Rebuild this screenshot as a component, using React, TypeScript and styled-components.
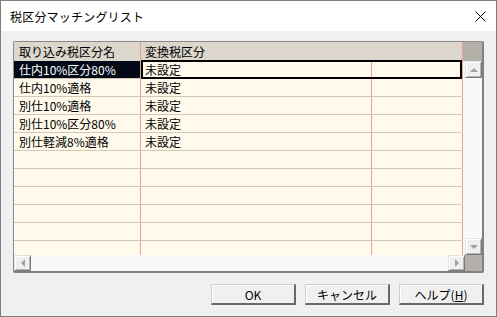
import React from "react";
import styled, { createGlobalStyle, css } from "styled-components";

const Global = createGlobalStyle`
  html, body { margin: 0; padding: 0; background: #f0f0f0; }
  body { width: 497px; height: 317px; overflow: hidden; font-family: "Noto Sans CJK JP", "Noto Sans", sans-serif; }
`;

const Window = styled.div`
  width: 497px;
  height: 317px;
  box-sizing: border-box;
  border: 1px solid #7e7e7e;
  background: #f0f0f0;
  display: flex;
  flex-direction: column;
`;

const TitleBar = styled.div`
  height: 30px;
  background: #ffffff;
  display: flex;
  align-items: center;
  justify-content: space-between;
  padding: 0 10px 0 9px;
  flex-shrink: 0;
`;

const Title = styled.span`
  font-size: 12px;
  color: #000;
  letter-spacing: 0.2px;
`;

const Body = styled.div`
  flex: 1;
  display: flex;
  flex-direction: column;
  padding: 10px 12px 0 12px;
`;

const Grid = styled.div`
  width: 471px;
  height: 232px;
  box-sizing: border-box;
  border-top: 1px solid #8a8a8a;
  border-left: 1px solid #8a8a8a;
  border-right: 2px solid #808080;
  border-bottom: 2px solid #808080;
  border-radius: 2px;
  display: flex;
  flex-direction: column;
  overflow: hidden;
  background: #fffaeb;
`;

const Main = styled.div`
  height: 213px;
  display: flex;
`;

const Table = styled.div`
  width: 449px;
  height: 213px;
  overflow: hidden;
  background: #fffaeb;
`;

const COLS = "126px 1px 230px 1px 90px 1px";

const HeaderRow = styled.div`
  display: grid;
  grid-template-columns: ${COLS};
  height: 19px;
  background: #dcd6cc;
`;

const Line = styled.div<{ $hidden?: boolean }>`
  background: ${(p) => (p.$hidden ? "transparent" : "#dca596")};
`;

const HeadCell = styled.div<{ $pad: number }>`
  font-size: 12px;
  line-height: 19px;
  padding-left: ${(p) => p.$pad}px;
  color: #000;
  white-space: nowrap;
  overflow: hidden;
`;

const Row = styled.div<{ $selected?: boolean }>`
  position: relative;
  display: grid;
  grid-template-columns: ${COLS};
  height: 17px;
  border-bottom: 1px solid #d3c8b6;
  ${(p) =>
    p.$selected &&
    css`
      &::after {
        content: "";
        position: absolute;
        left: 127px;
        top: -1px;
        width: 321px;
        height: 19px;
        box-sizing: border-box;
        border: 2px solid #000;
      }
    `}
`;

const Cell = styled.div<{ $pad: number; $selected?: boolean }>`
  font-size: 12px;
  line-height: 17px;
  padding-left: ${(p) => p.$pad}px;
  white-space: nowrap;
  overflow: hidden;
  color: ${(p) => (p.$selected ? "#ffffff" : "#000")};
  background: ${(p) => (p.$selected ? "#030816" : "transparent")};
`;

const track = css`
  background: repeating-conic-gradient(#f3f3f3 0 25%, #ffffff 0 50%) 0 0 / 2px 2px;
`;

const VScroll = styled.div`
  width: 19px;
  display: flex;
  flex-direction: column;
  ${track};
`;

const Corner = styled.div<{ $w: number; $h: number }>`
  width: ${(p) => p.$w}px;
  height: ${(p) => p.$h}px;
  background: #b3b0a9;
  flex-shrink: 0;
`;

const Fill = styled.div`
  flex: 1;
`;

const ScrollBtn = styled.div<{ $dir: "up" | "down" | "left" | "right" }>`
  width: 17px;
  height: 17px;
  box-sizing: border-box;
  flex-shrink: 0;
  background: #f0f0f0;
  border-top: 1px solid #e3e3e3;
  border-left: 1px solid #e3e3e3;
  border-right: 1px solid #7a7a7a;
  border-bottom: 1px solid #7a7a7a;
  box-shadow: inset 1px 1px 0 #ffffff, inset -1px -1px 0 #b4b4b4;
  display: flex;
  align-items: center;
  justify-content: center;
  margin-left: ${(p) => (p.$dir === "up" || p.$dir === "down" ? "2px" : "0")};
  &::before {
    content: "";
    width: 0;
    height: 0;
    ${(p) =>
      p.$dir === "up"
        ? css`border-left: 4px solid transparent; border-right: 4px solid transparent; border-bottom: 4px solid #a0a0a0;`
        : p.$dir === "down"
        ? css`border-left: 4px solid transparent; border-right: 4px solid transparent; border-top: 4px solid #a0a0a0;`
        : p.$dir === "left"
        ? css`border-top: 4px solid transparent; border-bottom: 4px solid transparent; border-right: 4px solid #a0a0a0;`
        : css`border-top: 4px solid transparent; border-bottom: 4px solid transparent; border-left: 4px solid #a0a0a0;`}
  }
`;

const HScroll = styled.div`
  height: 16px;
  display: flex;
  ${track};
  & > ${ScrollBtn} {
    height: 16px;
  }
`;

const ButtonRow = styled.div`
  display: flex;
  justify-content: flex-end;
  gap: 9px;
  margin-top: 11px;
`;

const DlgButton = styled.button`
  width: 85px;
  height: 21px;
  box-sizing: border-box;
  padding: 0;
  background: #f0f0f0;
  border-top: 1px solid #cfcfcf;
  border-left: 1px solid #cfcfcf;
  border-right: 2px solid #6a6a6a;
  border-bottom: 2px solid #6a6a6a;
  box-shadow: inset 1px 1px 0 #ffffff;
  font-family: "Noto Sans CJK JP", "Noto Sans", sans-serif;
  font-size: 12px;
  line-height: 17px;
  color: #000;
  u { text-decoration: underline; }
`;

const rows = [
  "仕内10%区分80%",
  "仕内10%適格",
  "別仕10%適格",
  "別仕10%区分80%",
  "別仕軽減8%適格",
  "",
  "",
  "",
  "",
  "",
  "",
];

export default function App() {
  return (
    <>
      <Global />
      <Window>
        <TitleBar>
          <Title>税区分マッチングリスト</Title>
          <svg width="11" height="11" viewBox="0 0 11 11">
            <path d="M0.5 0.5 L10.5 10.5 M10.5 0.5 L0.5 10.5" stroke="#000" strokeWidth="1" />
          </svg>
        </TitleBar>
        <Body>
          <Grid>
            <Main>
              <Table>
                <HeaderRow>
                  <HeadCell $pad={5}>取り込み税区分名</HeadCell>
                  <Line />
                  <HeadCell $pad={4}>変換税区分</HeadCell>
                  <Line $hidden />
                  <HeadCell $pad={4} />
                  <Line />
                </HeaderRow>
                {rows.map((name, i) => (
                  <Row key={i} $selected={i === 0}>
                    <Cell $pad={5} $selected={i === 0}>{name}</Cell>
                    <Line />
                    <Cell $pad={4}>{name ? "未設定" : ""}</Cell>
                    <Line />
                    <Cell $pad={4} />
                    <Line />
                  </Row>
                ))}
              </Table>
              <VScroll>
                <Corner $w={19} $h={19} />
                <ScrollBtn $dir="up" />
                <Fill />
                <ScrollBtn $dir="down" />
              </VScroll>
            </Main>
            <HScroll>
              <ScrollBtn $dir="left" />
              <Fill />
              <ScrollBtn $dir="right" />
              <Corner $w={17} $h={16} />
            </HScroll>
          </Grid>
          <ButtonRow>
            <DlgButton>OK</DlgButton>
            <DlgButton>キャンセル</DlgButton>
            <DlgButton>
              ヘルプ(<u>H</u>)
            </DlgButton>
          </ButtonRow>
        </Body>
      </Window>
    </>
  );
}
